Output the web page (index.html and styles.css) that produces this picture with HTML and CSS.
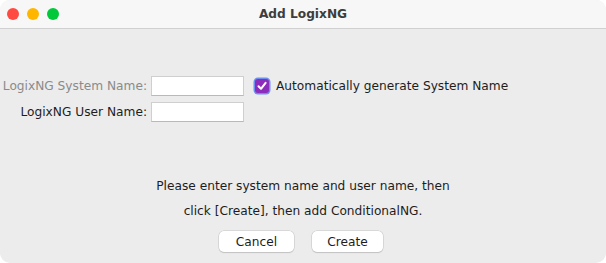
FILE: index.html
```html
<!DOCTYPE html>
<html lang="en">
<head>
    <meta charset="UTF-8">
    <title>Add LogixNG</title>
    <link rel="stylesheet" href="styles.css">
</head>
<body>
    <div class="window">
        <div class="titlebar">
            <div class="lights">
                <span class="light red"></span>
                <span class="light yellow"></span>
                <span class="light green"></span>
            </div>
            <div class="title">Add LogixNG</div>
        </div>
        <div class="content">
            <div class="form">
                <div class="row">
                    <label class="label disabled">LogixNG System Name:</label>
                    <input class="field" type="text" disabled>
                    <label class="check">
                        <span class="box">
                            <svg width="12" height="12" viewBox="0 0 12 12">
                                <path d="M2.5 6.2 L5 8.8 L9.6 2.8" fill="none" stroke="#fff" stroke-width="2" stroke-linecap="round" stroke-linejoin="round"/>
                            </svg>
                        </span>
                        Automatically generate System Name
                    </label>
                </div>
                <div class="row">
                    <label class="label">LogixNG User Name:</label>
                    <input class="field" type="text">
                </div>
            </div>
            <div class="message">
                <p>Please enter system name and user name, then</p>
                <p>click [Create], then add ConditionalNG.</p>
            </div>
            <div class="actions">
                <button class="btn cancel">Cancel</button>
                <button class="btn create">Create</button>
            </div>
        </div>
    </div>
</body>
</html>
```

FILE: styles.css
```css
body {
    margin: 0;
    background: #ffffff;
    font-family: "DejaVu Sans", "Liberation Sans", sans-serif;
    font-size: 12.2px;
    color: #1d1d1d;
}

.window {
    width: 606px;
    height: 263px;
    background: #ececec;
    border-radius: 10px;
    overflow: hidden;
    display: flex;
    flex-direction: column;
}

.titlebar {
    height: 28px;
    background: #f7f7f7;
    border-bottom: 1px solid #d0d0d0;
    display: flex;
    align-items: center;
    position: relative;
}

.lights {
    display: flex;
    gap: 8px;
    padding-left: 7px;
}

.light {
    width: 12px;
    height: 12px;
    border-radius: 50%;
}

.red { background: #ff4a42; }
.yellow { background: #ffb600; }
.green { background: #00c83a; }

.title {
    position: absolute;
    left: 0;
    right: 0;
    text-align: center;
    font-weight: bold;
    font-size: 12.2px;
    color: #3d3d3d;
}

.content {
    flex: 1;
    display: flex;
    flex-direction: column;
}

.form {
    padding-top: 47px;
    display: flex;
    flex-direction: column;
    gap: 6px;
}

.row {
    display: flex;
    align-items: center;
    height: 20px;
}

.label {
    width: 151px;
    text-align: right;
    padding-right: 4px;
    box-sizing: border-box;
    color: #1d1d1d;
}

.label.disabled {
    color: #8a8a8a;
}

.field {
    width: 93px;
    height: 20px;
    box-sizing: border-box;
    border: 1px solid #cfcfcf;
    border-bottom-color: #b9b9b9;
    background: #ffffff;
    margin: 0;
    padding: 0 3px;
}

.check {
    display: flex;
    align-items: center;
    gap: 7px;
    margin-left: 11px;
}

.box {
    width: 14px;
    height: 14px;
    border-radius: 3px;
    background: #8c2cbc;
    box-shadow: 0 0 0 1.5px #6d8ff0;
    display: flex;
    align-items: center;
    justify-content: center;
}

.message {
    margin-top: 52px;
    text-align: center;
}

.message p {
    margin: 0;
    line-height: 25px;
}

.actions {
    display: flex;
    justify-content: center;
    gap: 18px;
    margin-top: 7px;
    padding-right: 4px;
}

.btn {
    font-family: inherit;
    font-size: 12.2px;
    color: #1d1d1d;
    background: #ffffff;
    border: none;
    border-radius: 5px;
    box-shadow: 0 0 0 0.5px #c4c4c4, 0 1px 1px rgba(0, 0, 0, 0.18);
    height: 21px;
    padding: 0;
}

.cancel { width: 75px; }
.create { width: 71px; }
```
